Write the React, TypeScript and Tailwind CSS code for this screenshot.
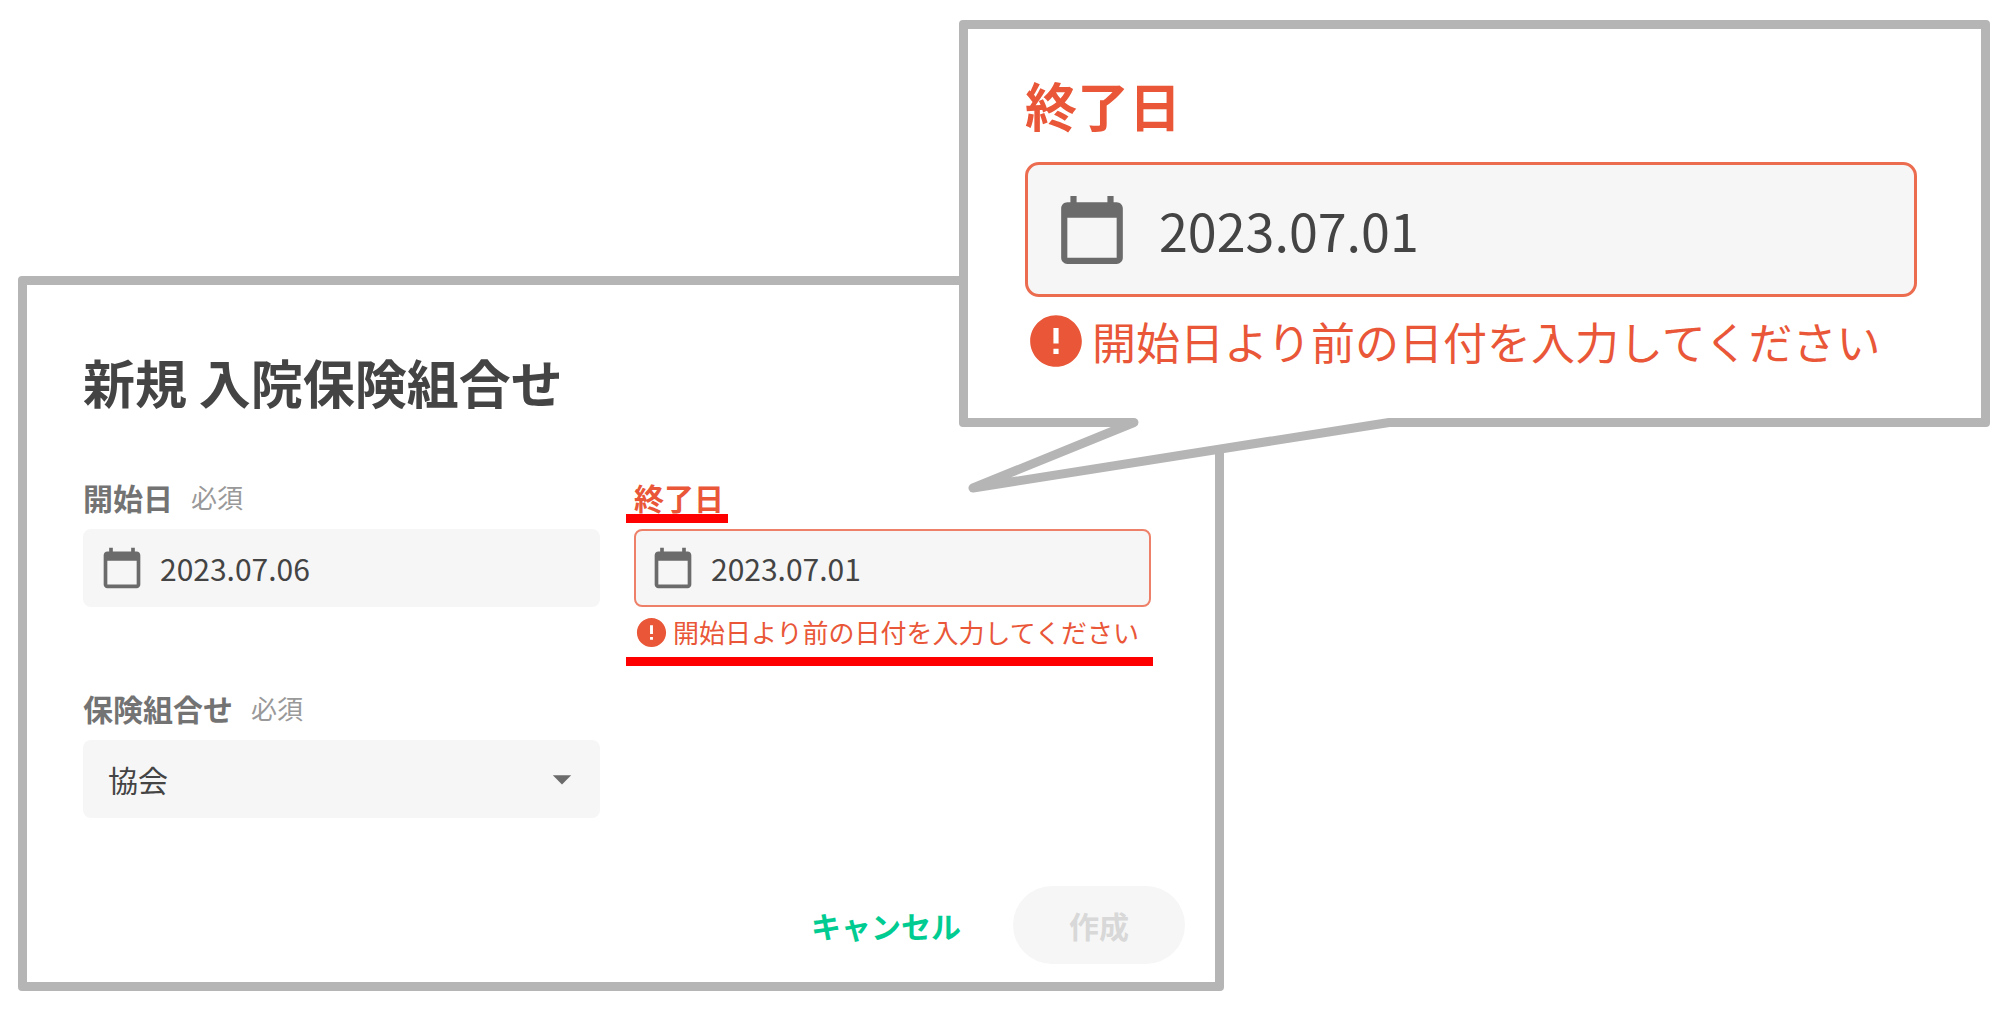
import React from 'react'
import { MdArrowDropDown, MdCalendarToday, MdError } from 'react-icons/md'

type DateFieldProps = {
  id: string
  label: string
  value: string
  required?: boolean
  error?: string
}

function DateField({ id, label, value, required, error }: DateFieldProps) {
  return (
    <div className="flex-1 min-w-0">

      <div className="flex items-center gap-[18px] h-10 mb-3">
        <label
          htmlFor={id}
          className={error ? 'relative text-[30px] leading-10 font-bold text-[#e95738]' : 'text-[30px] leading-10 font-bold text-[#737373]'}
        >
          {label}
          {error && <span className="absolute -left-2 top-[37px] h-[9px] w-[102px] bg-[#ff0000]"></span>}
        </label>
        {required && <span className="text-[26px] leading-10 text-[#999999]">必須</span>}
      </div>

      <div
        className={
          error
            ? 'flex items-center gap-4 h-[78px] pl-[15px] pr-4 rounded-lg border-2 border-[#ee8069] bg-[#f6f6f6]'
            : 'flex items-center gap-4 h-[78px] pl-[15px] pr-4 rounded-lg border-2 border-[#f6f6f6] bg-[#f6f6f6]'
        }
      >
        <MdCalendarToday className="size-11 shrink-0 text-[#6b6b6b]" />
        <input
          id={id}
          type="text"
          defaultValue={value}
          className="w-full min-w-0 bg-transparent text-[30px] leading-10 text-[#444444] outline-none"
        />
      </div>

      {error && (
        <p className="relative flex items-center gap-1 h-10 mt-[5px] text-[26px] leading-10 whitespace-nowrap text-[#e95738]">
          <MdError className="size-[35px] shrink-0" />
          {error}
          <span className="absolute -left-2 -right-0.5 top-[45px] h-[9px] bg-[#ff0000]"></span>
        </p>
      )}

    </div>
  )
}

function InsuranceDialog() {
  return (
    <form className="w-full max-w-[1206px] rounded-[4px] border-[9px] border-[#b5b5b5] bg-white pt-[65px]">

      <h1 className="pl-14 text-[52px] leading-[64px] font-bold text-[#444444]">
        新規 入院保険組合せ
      </h1>

      <div className="flex gap-[34px] h-[211px] mt-[63px] pl-14 pr-16">
        <DateField id="start-date" label="開始日" value="2023.07.06" required />
        <DateField id="end-date" label="終了日" value="2023.07.01" error="開始日より前の日付を入力してください" />
      </div>

      <div className="grid grid-cols-2 gap-[34px] pl-14 pr-16">
        <div>
          <div className="flex items-center gap-[18px] h-10 mb-3">
            <label htmlFor="combination" className="text-[30px] leading-10 font-bold text-[#737373]">
              保険組合せ
            </label>
            <span className="text-[26px] leading-10 text-[#999999]">必須</span>
          </div>
          <div className="relative">
            <select
              id="combination"
              className="w-full h-[78px] pl-[25px] pr-16 appearance-none rounded-lg bg-[#f6f6f6] text-[30px] leading-10 text-[#444444] outline-none"
            >
              <option>協会</option>
            </select>
            <MdArrowDropDown className="absolute right-4 top-[17px] size-11 text-[#6b6b6b] pointer-events-none" />
          </div>
        </div>
      </div>

      <div className="flex justify-end items-center gap-[52px] mt-[68px] pr-[30px] pb-[18px]">
        <button type="button" className="text-[30px] leading-10 font-bold text-[#00cc92]">
          キャンセル
        </button>
        <button type="submit" disabled className="h-[78px] px-14 rounded-full bg-[#f6f6f6] text-[30px] leading-10 font-bold text-[#d8d8d8]">
          作成
        </button>
      </div>

    </form>
  )
}

// Speech bubble that enlarges the end date field
function Callout() {
  return (
    <aside className="absolute top-5 right-2.5 w-[1031px] rounded-[4px] border-[9px] border-[#b5b5b5] bg-white pt-10 pl-[57px] pr-16 pb-[45px]">

      <label htmlFor="end-date-large" className="block text-[52px] leading-[72px] font-bold text-[#e95738]">
        終了日
      </label>

      <div className="flex items-center gap-[30px] h-[135px] mt-[21px] pl-[27px] pr-6 rounded-[14px] border-[3px] border-[#ec6c50] bg-[#f6f6f6]">
        <MdCalendarToday className="size-[74px] shrink-0 text-[#6b6b6b]" />
        <input
          id="end-date-large"
          type="text"
          defaultValue="2023.07.01"
          className="w-full min-w-0 bg-transparent text-[52px] leading-[72px] text-[#444444] outline-none"
        />
      </div>

      <p className="flex items-center gap-[5px] h-16 mt-3 text-[44px] leading-[64px] whitespace-nowrap text-[#e95738]">
        <MdError className="size-[62px] shrink-0" />
        開始日より前の日付を入力してください
      </p>

      <svg className="absolute left-0 top-full" width="440" height="80" viewBox="0 0 440 80" aria-hidden="true">
        <path d="M166 0 L166 4.5 L5 70 L421 4.5 L421 0 Z" fill="#ffffff" />
        <path
          d="M100 4.5 H166 L5 70 L421 4.5 H436"
          fill="none"
          stroke="#b5b5b5"
          strokeWidth="9"
          strokeLinecap="butt"
          strokeLinejoin="round"
        />
      </svg>

    </aside>
  )
}

function App() {
  return (
    <main
      lang="ja"
      className="relative bg-white pt-[276px] pl-[18px] pr-2.5 pb-[18px] font-['Noto_Sans_CJK_JP',sans-serif]"
    >
      <InsuranceDialog />
      <Callout />
    </main>
  )
}

export default App
